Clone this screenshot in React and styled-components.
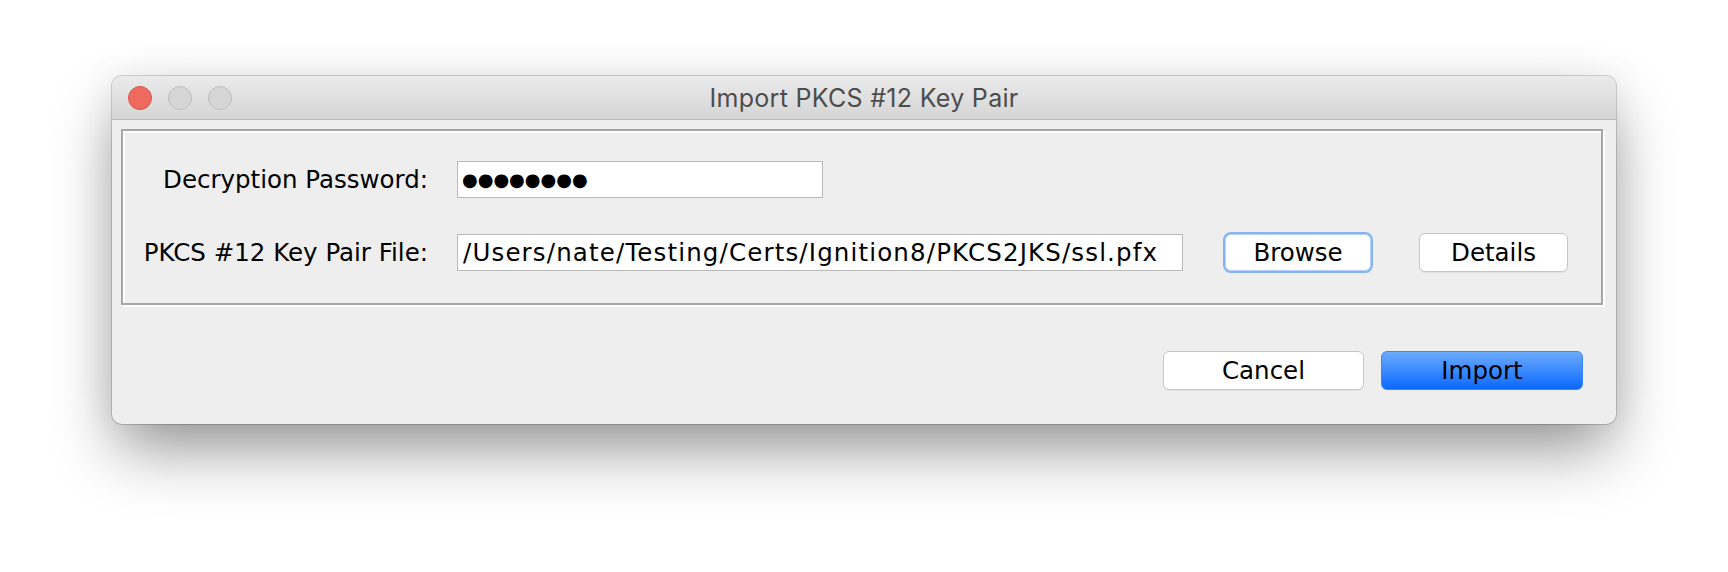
import React from 'react';
import styled, { createGlobalStyle } from 'styled-components';

const GlobalStyle = createGlobalStyle`
    html, body {
        margin: 0;
        padding: 0;
        background: #ffffff;
    }
    body {
        font-family: 'DejaVu Sans', 'Liberation Sans', sans-serif;
        -webkit-font-smoothing: antialiased;
    }
`;

const Stage = styled.div`
    height: 572px;
    padding-top: 76px;
    box-sizing: border-box;
    display: flex;
    justify-content: center;
    overflow: hidden;
`;

const Window = styled.div`
    width: 1504px;
    align-self: flex-start;
    background: #eeeeee;
    border-radius: 10px;
    overflow: hidden;
    box-shadow:
        0 0 0 1px rgba(0, 0, 0, 0.16),
        0 30px 64px -6px rgba(0, 0, 0, 0.42),
        0 0 40px rgba(0, 0, 0, 0.06);
`;

const TitleBar = styled.div`
    height: 44px;
    box-sizing: border-box;
    border-bottom: 1px solid #b9b9b9;
    background: linear-gradient(#ebebeb, #d5d5d5);
    display: grid;
    grid-template-columns: 1fr auto 1fr;
    align-items: center;
    padding: 0 16px;
`;

const Lights = styled.div`
    display: flex;
    gap: 16px;
`;

const Light = styled.span`
    width: 24px;
    height: 24px;
    border-radius: 50%;
    box-sizing: border-box;
    background: ${(p) => (p.$close ? '#ee6a5f' : '#d6d6d6')};
    border: 1px solid ${(p) => (p.$close ? '#d8544a' : '#bdbdbd')};
`;

const Title = styled.div`
    font-family: 'Inter', 'Liberation Sans', sans-serif;
    font-size: 25px;
    color: #4d4d4d;
    letter-spacing: 0.3px;
`;

const Body = styled.div`
    padding: 9px 13px 34px 9px;
`;

const Panel = styled.div`
    border: 2px solid #a6a6a6;
    box-shadow: inset 2px 2px 0 #ffffff, 2px 2px 0 #ffffff;
    padding: 30px 0 30px 16px;
    display: flex;
    flex-direction: column;
    gap: 34px;
`;

const Row = styled.div`
    display: flex;
    align-items: center;
    min-height: ${(p) => p.$h || 37}px;
`;

const Label = styled.div`
    width: 289px;
    text-align: right;
    font-size: 24.5px;
    color: #000;
    margin-right: 29px;
    white-space: nowrap;
`;

const Field = styled.div`
    width: ${(p) => p.$w}px;
    height: 37px;
    box-sizing: border-box;
    background: #ffffff;
    border: 1px solid #bababa;
    padding-left: ${(p) => (p.$dots ? 4 : 5)}px;
    display: flex;
    align-items: center;
    font-size: ${(p) => (p.$dots ? 18 : 24.5)}px;
    letter-spacing: ${(p) => (p.$dots ? 0 : 1.15)}px;
    color: #000;
    white-space: nowrap;
    overflow: hidden;
`;

const Button = styled.button`
    font-family: 'DejaVu Sans', sans-serif;
    font-size: 24.5px;
    color: #000;
    width: ${(p) => p.$w}px;
    height: ${(p) => p.$h || 39}px;
    margin-left: ${(p) => p.$ml || 0}px;
    padding: 0;
    box-sizing: border-box;
    border-radius: 6px;
    background: #ffffff;
    border: 1px solid #c6c6c6;
    box-shadow: 0 1px 0 rgba(0, 0, 0, 0.06);
    cursor: default;
`;

const FocusButton = styled(Button)`
    border-radius: 8px;
    border: 2px solid #84b3ef;
    box-shadow: inset 0 0 0 1px #b7d2f6;
`;

const PrimaryButton = styled(Button)`
    background: linear-gradient(#6cabfd, #0b68ff);
    border: 1px solid #3d86f7;
    box-shadow: none;
`;

const Actions = styled.div`
    display: flex;
    justify-content: flex-end;
    gap: 17px;
    margin-top: 46px;
    padding-right: 20px;
`;

export default function App() {
    return (
        <>
            <GlobalStyle />
            <Stage>
                <Window>
                    <TitleBar>
                        <Lights>
                            <Light $close />
                            <Light />
                            <Light />
                        </Lights>
                        <Title>Import PKCS #12 Key Pair</Title>
                        <div />
                    </TitleBar>
                    <Body>
                        <Panel>
                            <Row>
                                <Label>Decryption Password:</Label>
                                <Field $w={366} $dots>●●●●●●●●</Field>
                            </Row>
                            <Row $h={41}>
                                <Label>PKCS #12 Key Pair File:</Label>
                                <Field $w={726}>/Users/nate/Testing/Certs/Ignition8/PKCS2JKS/ssl.pfx</Field>
                                <FocusButton $w={150} $h={41} $ml={40}>Browse</FocusButton>
                                <Button $w={149} $ml={46}>Details</Button>
                            </Row>
                        </Panel>
                        <Actions>
                            <Button $w={201}>Cancel</Button>
                            <PrimaryButton $w={202}>Import</PrimaryButton>
                        </Actions>
                    </Body>
                </Window>
            </Stage>
        </>
    );
}
